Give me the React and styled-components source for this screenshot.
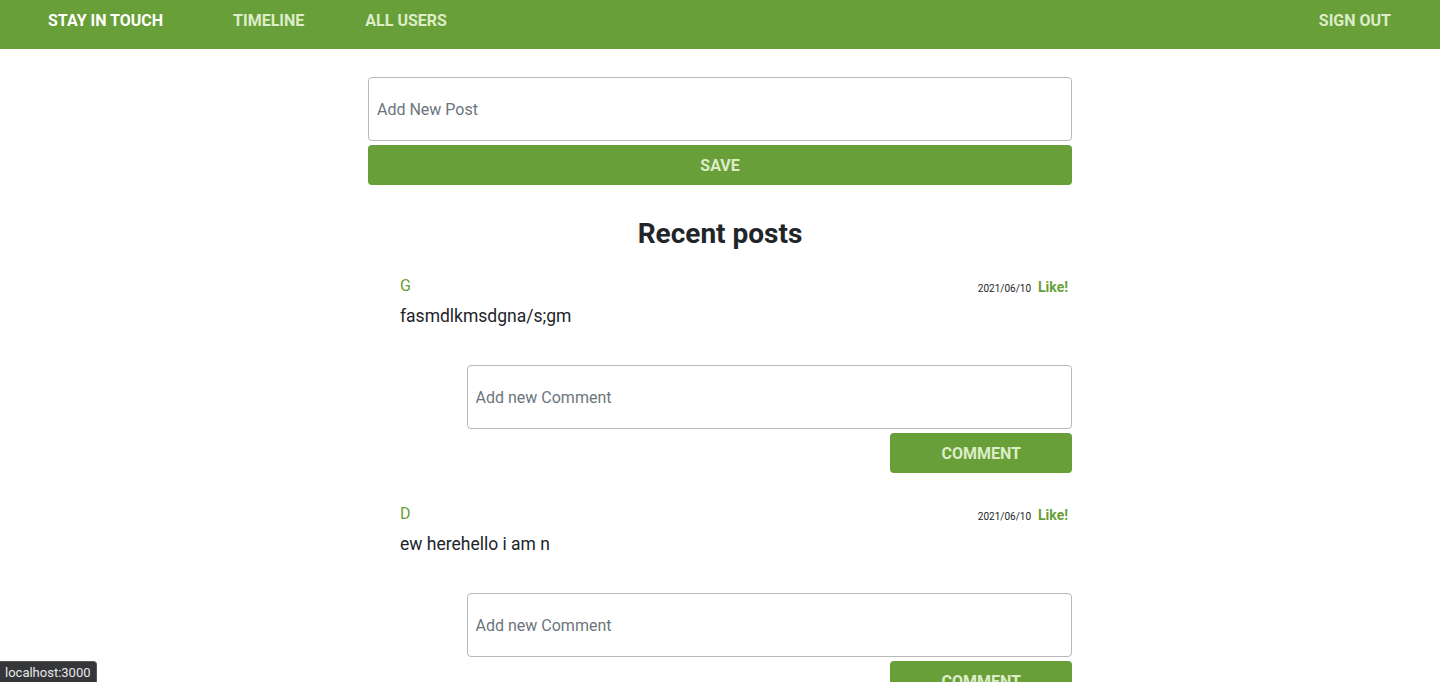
import React from 'react'
import styled, { createGlobalStyle } from 'styled-components'

const GREEN = '#689f38'
const LIGHT = '#dcedc8'

const GlobalStyle = createGlobalStyle`
  body {
    margin: 0;
    font-family: Roboto, "Liberation Sans", sans-serif;
    color: #212529;
    background: #fff;
  }
`

const Nav = styled.nav`
  display: flex;
  align-items: flex-start;
  height: 49px;
  padding: 9px 49px 0 48px;
  box-sizing: border-box;
  background: ${GREEN};
`

const NavLink = styled.a`
  font-size: 16px;
  line-height: 24px;
  font-weight: 700;
  color: ${(p) => (p.$brand ? '#fff' : LIGHT)};
  margin-right: ${(p) => p.$gap || 0}px;
  margin-left: ${(p) => (p.$right ? 'auto' : '0')};
  text-decoration: none;
  cursor: pointer;
`

const Main = styled.main`
  width: 704px;
  margin: 28px auto 0;
`

const Field = styled.input`
  display: block;
  width: ${(p) => p.$width || '100%'};
  margin-left: auto;
  height: 64px;
  box-sizing: border-box;
  padding: 0 8px;
  border: 1px solid #b8b8b8;
  border-radius: 4px;
  font-family: inherit;
  font-size: 16px;
  color: #495057;
  outline: none;

  &::placeholder {
    color: #6c757d;
  }
`

const Button = styled.button`
  display: block;
  width: ${(p) => p.$width || '100%'};
  margin: 4px 0 0 auto;
  height: 40px;
  border: none;
  border-radius: 4px;
  background: ${GREEN};
  color: ${LIGHT};
  font-family: inherit;
  font-size: 16px;
  font-weight: 700;
  cursor: pointer;
`

const Heading = styled.h2`
  margin: 32px 0 22px;
  text-align: center;
  font-size: 28px;
  line-height: 34px;
  font-weight: 700;
  color: #212529;
`

const Post = styled.article`
  margin-bottom: 28px;
`

const PostHead = styled.div`
  display: flex;
  align-items: center;
  justify-content: space-between;
  padding: 0 4px 0 32px;
  height: 24px;
`

const Author = styled.span`
  font-size: 16px;
  color: ${GREEN};
`

const Meta = styled.div`
  display: flex;
  align-items: baseline;
  gap: 7px;
  margin-top: 3px;
`

const Date = styled.span`
  font-size: 10px;
  color: #212529;
`

const Like = styled.span`
  font-size: 14px;
  font-weight: 700;
  color: ${GREEN};
  cursor: pointer;
`

const Body = styled.p`
  margin: 7px 0 37px;
  padding-left: 32px;
  font-size: 17.5px;
  line-height: 24px;
`

const CommentBox = styled.div`
  width: 86%;
  margin-left: auto;
`

const Tooltip = styled.div`
  position: fixed;
  left: 0;
  bottom: 0;
  height: 21px;
  width: 97px;
  box-sizing: border-box;
  padding: 0 5px;
  display: flex;
  align-items: center;
  background: #35363a;
  border: 1px solid #55565a;
  border-left: none;
  border-bottom: none;
  border-radius: 0 4px 0 0;
  color: #e8e8e8;
  font-size: 13px;
  font-family: Roboto, "Liberation Sans", sans-serif;
`

const posts = [
  { author: 'G', date: '2021/06/10', text: 'fasmdlkmsdgna/s;gm' },
  { author: 'D', date: '2021/06/10', text: 'ew herehello i am n' },
]

export default function App() {
  return (
    <>
      <GlobalStyle />
      <Nav>
        <NavLink $brand $gap={70}>STAY IN TOUCH</NavLink>
        <NavLink $gap={61}>TIMELINE</NavLink>
        <NavLink>ALL USERS</NavLink>
        <NavLink $right>SIGN OUT</NavLink>
      </Nav>
      <Main>
        <Field placeholder="Add New Post" />
        <Button>SAVE</Button>
        <Heading>Recent posts</Heading>
        {posts.map((post, i) => (
          <Post key={i}>
            <PostHead>
              <Author>{post.author}</Author>
              <Meta>
                <Date>{post.date}</Date>
                <Like>Like!</Like>
              </Meta>
            </PostHead>
            <Body>{post.text}</Body>
            <CommentBox>
              <Field placeholder="Add new Comment" />
              <Button $width="30%">COMMENT</Button>
            </CommentBox>
          </Post>
        ))}
      </Main>
      <Tooltip>localhost:3000</Tooltip>
    </>
  )
}
